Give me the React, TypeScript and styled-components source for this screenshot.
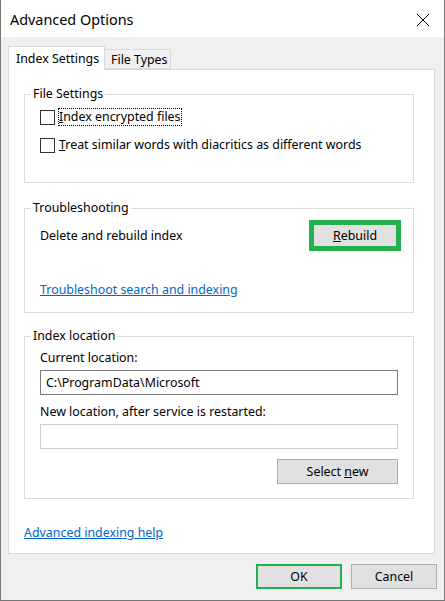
import React from "react";
import styled, { createGlobalStyle } from "styled-components";

const GlobalStyle = createGlobalStyle`
  html, body {
    margin: 0;
    padding: 0;
    background: #ffffff;
  }
  * {
    box-sizing: border-box;
  }
`;

const FONT = `"Noto Sans", "Liberation Sans", Arial, sans-serif`;

const Window = styled.div`
  width: 445px;
  height: 601px;
  display: flex;
  flex-direction: column;
  background: #f0f0f0;
  border: 1px solid #777777;
  border-top: none;
  font-family: ${FONT};
  font-size: 12.4px;
  color: #000;
`;

const TitleBar = styled.div`
  height: 37px;
  flex-shrink: 0;
  display: flex;
  align-items: center;
  justify-content: space-between;
  padding: 2px 14px 0 9px;
  background: #ffffff;
`;

const Title = styled.span`
  font-size: 14.4px;
`;

const CloseIcon = styled.svg`
  width: 14px;
  height: 14px;
`;

const Body = styled.div`
  flex: 1;
  display: flex;
  flex-direction: column;
  padding: 9px 7px 0 7px;
`;

const TabStrip = styled.div`
  display: flex;
  align-items: flex-end;
  height: 23px;
`;

const Tab = styled.div<{ $active?: boolean }>`
  position: relative;
  display: flex;
  align-items: center;
  height: ${(p) => (p.$active ? "24px" : "20px")};
  width: ${(p) => (p.$active ? "97px" : "67px")};
  margin-bottom: ${(p) => (p.$active ? "-1px" : "0")};
  margin-left: ${(p) => (p.$active ? "0" : "-1px")};
  padding: ${(p) => (p.$active ? "0 0 0 7px" : "1px 0 0 6px")};
  background: ${(p) => (p.$active ? "#ffffff" : "#f0f0f0")};
  border: 1px solid #d9d9d9;
  border-bottom: ${(p) => (p.$active ? "none" : "1px solid #d9d9d9")};
  z-index: ${(p) => (p.$active ? 2 : 1)};
  white-space: nowrap;
`;

const Panel = styled.div`
  background: #ffffff;
  border: 1px solid #d9d9d9;
  margin-right: 2px;
  padding: 16px 20px 12px 15px;
  display: flex;
  flex-direction: column;
`;

const Group = styled.fieldset<{ $gap?: number }>`
  margin: ${(p) => p.$gap ?? 0}px 0 0 0;
  padding: 0;
  border: 1px solid #dcdcdc;
  min-width: 0;
`;

const Legend = styled.legend`
  margin-left: 6px;
  padding: 0 2px;
  height: 16px;
  line-height: 16px;
`;

const GroupBody = styled.div<{ $pad: string }>`
  display: flex;
  flex-direction: column;
  padding: ${(p) => p.$pad};
`;

const CheckRow = styled.label`
  display: flex;
  align-items: center;
  height: 18px;
  & + & {
    margin-top: 10px;
  }
`;

const CheckBox = styled.span`
  width: 15px;
  height: 15px;
  border: 1px solid #333333;
  background: #ffffff;
  margin-right: 3px;
  flex-shrink: 0;
`;

const CheckText = styled.span<{ $focused?: boolean }>`
  height: 18px;
  line-height: 16px;
  padding: 0;
  border: 1px dotted ${(p) => (p.$focused ? "#000" : "transparent")};
  white-space: nowrap;
`;

const Row = styled.div`
  display: flex;
  align-items: center;
  justify-content: space-between;
  height: 31px;
`;

const Button = styled.button<{ $focus?: "strong" | "thin" }>`
  width: 86px;
  height: 25px;
  margin: 0;
  padding: 0;
  font-family: ${FONT};
  font-size: 12.4px;
  color: #000;
  background: #e1e1e1;
  border: ${(p) => (p.$focus ? "2px solid #22b14c" : "1px solid #adadad")};
  outline: ${(p) => (p.$focus === "strong" ? "3px solid #22b14c" : "none")};
  flex-shrink: 0;
`;

const Link = styled.a<{ $gap: number }>`
  display: block;
  margin-top: ${(p) => p.$gap}px;
  height: 16px;
  line-height: 16px;
  color: #0066cc;
  text-decoration: underline;
  align-self: flex-start;
`;

const FieldLabel = styled.div<{ $gap: number }>`
  margin-top: ${(p) => p.$gap}px;
  height: 16px;
  line-height: 16px;
`;

const TextField = styled.div<{ $disabled?: boolean }>`
  margin-top: 4px;
  height: 25px;
  display: flex;
  align-items: center;
  padding-left: 5px;
  background: #ffffff;
  border: 1px solid ${(p) => (p.$disabled ? "#cccccc" : "#7a7a7a")};
`;

const RightAligned = styled.div`
  display: flex;
  justify-content: flex-end;
  margin-top: 10px;
`;

const Footer = styled.div`
  display: flex;
  justify-content: flex-end;
  gap: 9px;
  margin-top: 10px;
`;

const App: React.FC = () => {
  return (
    <>
      <GlobalStyle />
      <Window>
        <TitleBar>
          <Title>Advanced Options</Title>
          <CloseIcon viewBox="0 0 14 14">
            <path d="M1 1 L13 13 M13 1 L1 13" stroke="#000" strokeWidth="1" fill="none" />
          </CloseIcon>
        </TitleBar>
        <Body>
          <TabStrip>
            <Tab $active>Index Settings</Tab>
            <Tab>File Types</Tab>
          </TabStrip>
          <Panel>
            <Group>
              <Legend>File Settings</Legend>
              <GroupBody $pad="6px 0 28px 15px">
                <CheckRow>
                  <CheckBox />
                  <CheckText $focused>
                    <u>I</u>ndex encrypted files
                  </CheckText>
                </CheckRow>
                <CheckRow>
                  <CheckBox />
                  <CheckText>
                    <u>T</u>reat similar words with diacritics as different words
                  </CheckText>
                </CheckRow>
              </GroupBody>
            </Group>

            <Group $gap={17}>
              <Legend>Troubleshooting</Legend>
              <GroupBody $pad="4px 15px 14px 15px">
                <Row>
                  <span>Delete and rebuild index</span>
                  <Button $focus="strong">
                    <u>R</u>ebuild
                  </Button>
                </Row>
                <Link $gap={31}>Troubleshoot search and indexing</Link>
              </GroupBody>
            </Group>

            <Group $gap={15}>
              <Legend>Index location</Legend>
              <GroupBody $pad="6px 15px 14px 15px">
                <FieldLabel $gap={0}>Current location:</FieldLabel>
                <TextField>C:\ProgramData\Microsoft</TextField>
                <FieldLabel $gap={9}>New location, after service is restarted:</FieldLabel>
                <TextField $disabled />
                <RightAligned>
                  <Button style={{ width: 121 }}>
                    Select <u>n</u>ew
                  </Button>
                </RightAligned>
              </GroupBody>
            </Group>

            <Link $gap={26}>Advanced indexing help</Link>
          </Panel>
          <Footer>
            <Button $focus="thin">OK</Button>
            <Button>Cancel</Button>
          </Footer>
        </Body>
      </Window>
    </>
  );
};

export default App;
